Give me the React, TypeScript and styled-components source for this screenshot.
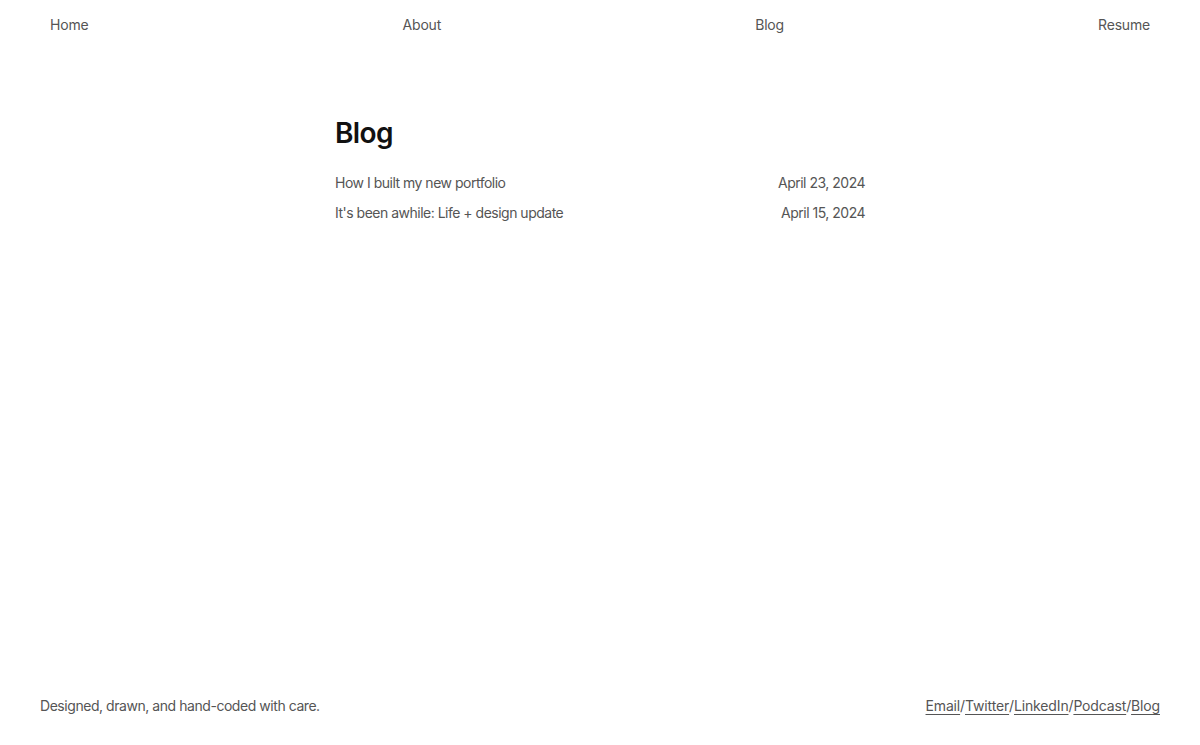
import React from "react";
import styled, { createGlobalStyle } from "styled-components";

const Global = createGlobalStyle`
  html, body { margin: 0; padding: 0; background: #fff; }
  body { font-family: Inter, "Noto Sans", "Liberation Sans", sans-serif; -webkit-font-smoothing: antialiased; }
  * { box-sizing: border-box; }
`;

const Page = styled.div`
  min-height: 100vh;
  display: flex;
  flex-direction: column;
`;

const Nav = styled.nav`
  display: flex;
  justify-content: space-between;
  align-items: center;
  height: 49px;
  padding: 0 50px;
`;

const NavLink = styled.a`
  font-size: 14px;
  color: #555;
  text-decoration: none;
  letter-spacing: -0.2px;
`;

const Main = styled.main`
  flex: 1;
  width: 530px;
  margin: 0 auto;
  padding-top: 66px;
`;

const Title = styled.h1`
  margin: 0 0 16px;
  font-size: 28px;
  line-height: 36px;
  font-weight: 600;
  color: #111;
  letter-spacing: -0.6px;
`;

const PostList = styled.ul`
  list-style: none;
  margin: 0;
  padding: 0;
`;

const PostRow = styled.li`
  display: flex;
  justify-content: space-between;
  align-items: center;
  height: 30px;
  font-size: 14px;
  color: #555;
  letter-spacing: -0.5px;
`;

const PostLink = styled.a`
  color: inherit;
  text-decoration: none;
`;

const Footer = styled.footer`
  display: flex;
  justify-content: space-between;
  align-items: center;
  padding: 28px 40px;
  line-height: 22px;
  font-size: 14px;
  color: #555;
  letter-spacing: -0.45px;
`;

const Links = styled.div`
  display: flex;
  letter-spacing: -0.15px;
`;

const FootLink = styled.a`
  color: #555;
  text-decoration: underline;
  text-underline-offset: 3px;
  text-decoration-thickness: 1px;
`;

const Sep = styled.span`
  color: #555;
`;

const posts = [
  { title: "How I built my new portfolio", date: "April 23, 2024" },
  { title: "It's been awhile: Life + design update", date: "April 15, 2024" },
];

const footLinks = ["Email", "Twitter", "LinkedIn", "Podcast", "Blog"];

export default function App() {
  return (
    <Page>
      <Global />
      <Nav>
        <NavLink href="#">Home</NavLink>
        <NavLink href="#">About</NavLink>
        <NavLink href="#">Blog</NavLink>
        <NavLink href="#">Resume</NavLink>
      </Nav>
      <Main>
        <Title>Blog</Title>
        <PostList>
          {posts.map((p) => (
            <PostRow key={p.title}>
              <PostLink href="#">{p.title}</PostLink>
              <span>{p.date}</span>
            </PostRow>
          ))}
        </PostList>
      </Main>
      <Footer>
        <span>Designed, drawn, and hand-coded with care.</span>
        <Links>
          {footLinks.map((l, i) => (
            <React.Fragment key={l}>
              {i > 0 && <Sep>/</Sep>}
              <FootLink href="#">{l}</FootLink>
            </React.Fragment>
          ))}
        </Links>
      </Footer>
    </Page>
  );
}
